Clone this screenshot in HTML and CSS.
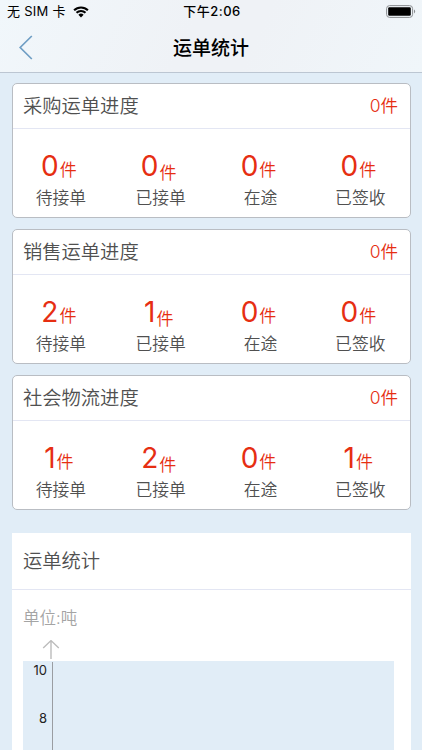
FILE: index.html
```
<!DOCTYPE html>
<html lang="zh-CN">
<head>
  <meta charset="UTF-8">
  <meta name="viewport" content="width=device-width, initial-scale=1.0">
  <title>运单统计</title>
  <link rel="stylesheet" href="styles.css">
</head>
<body>
<header class="top">
  <div class="status-bar">
    <div class="carrier">
      <span>无 SIM 卡</span>
      <svg class="wifi" width="16" height="12" viewBox="0 0 16 12">
        <path d="M1.1 4.3a9.8 9.8 0 0 1 13.8 0M3.5 6.8a6.4 6.4 0 0 1 9 0" fill="none" stroke="#000" stroke-width="2.1"/>
        <path d="M8 11.4 5.4 8.8a3.7 3.7 0 0 1 5.2 0z"/>
      </svg>
    </div>
    <div class="time">下午2:06</div>
    <svg class="battery" width="30" height="13" viewBox="0 0 30 13">
      <rect x="0.6" y="0.6" width="26" height="11.8" rx="3" fill="none" stroke="#8b8e91" stroke-width="1"/>
      <rect x="2.2" y="2.2" width="22.6" height="8.6" rx="1.2"/>
      <path d="M28 4.6c1.6.8 1.6 3 0 3.8z" fill="#8b8e91"/>
    </svg>
  </div>
  <div class="nav-bar">
    <svg class="back" width="14" height="25" viewBox="0 0 14 25">
      <path d="M12.8 1 1.2 12.5 12.8 24" fill="none" stroke="#6f9ec4" stroke-width="1.7"/>
    </svg>
    <h1>运单统计</h1>
  </div>
</header>

<main>
  <section class="card">
    <div class="card-head"><h2>采购运单进度</h2><span class="total">0件</span></div>
    <div class="stats">
      <div class="stat"><p class="count">0<span>件</span></p><p class="label">待接单</p></div>
      <div class="stat"><p class="count low">0<span>件</span></p><p class="label">已接单</p></div>
      <div class="stat"><p class="count">0<span>件</span></p><p class="label">在途</p></div>
      <div class="stat"><p class="count">0<span>件</span></p><p class="label">已签收</p></div>
    </div>
  </section>

  <section class="card">
    <div class="card-head"><h2>销售运单进度</h2><span class="total">0件</span></div>
    <div class="stats">
      <div class="stat"><p class="count">2<span>件</span></p><p class="label">待接单</p></div>
      <div class="stat"><p class="count low">1<span>件</span></p><p class="label">已接单</p></div>
      <div class="stat"><p class="count">0<span>件</span></p><p class="label">在途</p></div>
      <div class="stat"><p class="count">0<span>件</span></p><p class="label">已签收</p></div>
    </div>
  </section>

  <section class="card">
    <div class="card-head"><h2>社会物流进度</h2><span class="total">0件</span></div>
    <div class="stats">
      <div class="stat"><p class="count">1<span>件</span></p><p class="label">待接单</p></div>
      <div class="stat"><p class="count low">2<span>件</span></p><p class="label">已接单</p></div>
      <div class="stat"><p class="count">0<span>件</span></p><p class="label">在途</p></div>
      <div class="stat"><p class="count">1<span>件</span></p><p class="label">已签收</p></div>
    </div>
  </section>

  <section class="chart-card">
    <h2>运单统计</h2>
    <p class="unit">单位:吨</p>
    <svg class="arrow" width="18" height="20" viewBox="0 0 18 20">
      <path d="M9 19V.5M1.2 8 9 .6 16.8 8" fill="none" stroke="#bcbcbc" stroke-width="1.4"/>
    </svg>
    <div class="chart">
      <div class="axis">
        <span>10</span>
        <span>8</span>
      </div>
    </div>
  </section>
</main>
</body>
</html>
```
FILE: styles.css
```
* {
  box-sizing: border-box;
}

body {
  margin: 0;
  height: 750px;
  overflow: hidden;
  display: flex;
  flex-direction: column;
  background: #e1edf7;
  color: #505050;
  font-family: Inter, "Noto Sans CJK SC", sans-serif;
}

h1, h2, p {
  margin: 0;
  font-weight: 350;
}

svg {
  display: block;
}

/* status bar + navigation */
.top {
  flex: none;
  height: 73px;
  border-bottom: 1px solid #bcc6d2;
  background: linear-gradient(115deg, #f1f7fb 0%, #eff2f6 45%, #eff2f6 60%, #f0f6fa 100%);
  color: #000;
}

.status-bar {
  display: grid;
  grid-template-columns: 1fr auto 1fr;
  align-items: center;
  height: 23px;
  padding: 0 6px 0 7px;
  font-size: 13px;
  line-height: 23px;
}

.carrier {
  display: flex;
  align-items: center;
  gap: 7px;
  letter-spacing: 0.25px;
}

.time {
  font-weight: 500;
  letter-spacing: 0.5px;
  padding-left: 1px;
}

.battery {
  justify-self: end;
}

.nav-bar {
  display: grid;
  grid-template-columns: 1fr auto 1fr;
  align-items: center;
  height: 49px;
  padding: 0 19px;
}

.nav-bar h1 {
  padding-top: 2px;
  font-size: 19px;
  font-weight: 500;
  line-height: 47px;
}

main {
  padding: 10px 11px 0 12px;
}

/* progress cards */
.card {
  height: 135px;
  margin-bottom: 11px;
  border: 1px solid #b9bdc3;
  border-radius: 5px;
  background: #fff;
}

.card-head {
  display: flex;
  justify-content: space-between;
  height: 45px;
  padding: 0 12px 0 10px;
  border-bottom: 1px solid #e3e6f3;
  line-height: 45px;
}

.card-head h2, .chart-card h2 {
  font-size: 19.3px;
}

.total {
  color: #e62e12;
  font-size: 17.5px;
  font-weight: 350;
  line-height: 44px;
}

.stats {
  display: grid;
  grid-template-columns: repeat(4, 99.8px);
  margin-left: -2px;
  padding-top: 20px;
  text-align: center;
}

.count {
  height: 35px;
  padding-right: 4px;
  color: #e62e12;
  font-size: 28px;
  font-weight: 400;
  line-height: 35px;
}

.count span {
  margin-left: 1px;
  font-size: 17px;
  font-weight: 350;
  line-height: 1;
}

.count.low span {
  position: relative;
  top: 3px;
}

.label {
  font-size: 16.8px;
  line-height: 29px;
}

/* chart */
.chart-card {
  height: 230px;
  margin-top: 23px;
  background: #fff;
}

.chart-card h2 {
  height: 57px;
  padding-left: 11px;
  border-bottom: 1px solid #e3e6f3;
  line-height: 57px;
}

.unit {
  height: 50px;
  padding-left: 11px;
  color: #a4a4a4;
  font-size: 16.5px;
  line-height: 56px;
}

.arrow {
  margin-left: 30px;
}

.chart {
  height: 110px;
  margin: 1px 17px 0 11px;
  padding-top: 1px;
  background: #e1edf7;
}

.axis {
  display: flex;
  flex-direction: column;
  gap: 31px;
  width: 30px;
  height: 109px;
  padding-right: 5px;
  border-right: 1px solid #9a9da2;
  color: #222;
  font-size: 13px;
  line-height: 17px;
  text-align: right;
}
```
